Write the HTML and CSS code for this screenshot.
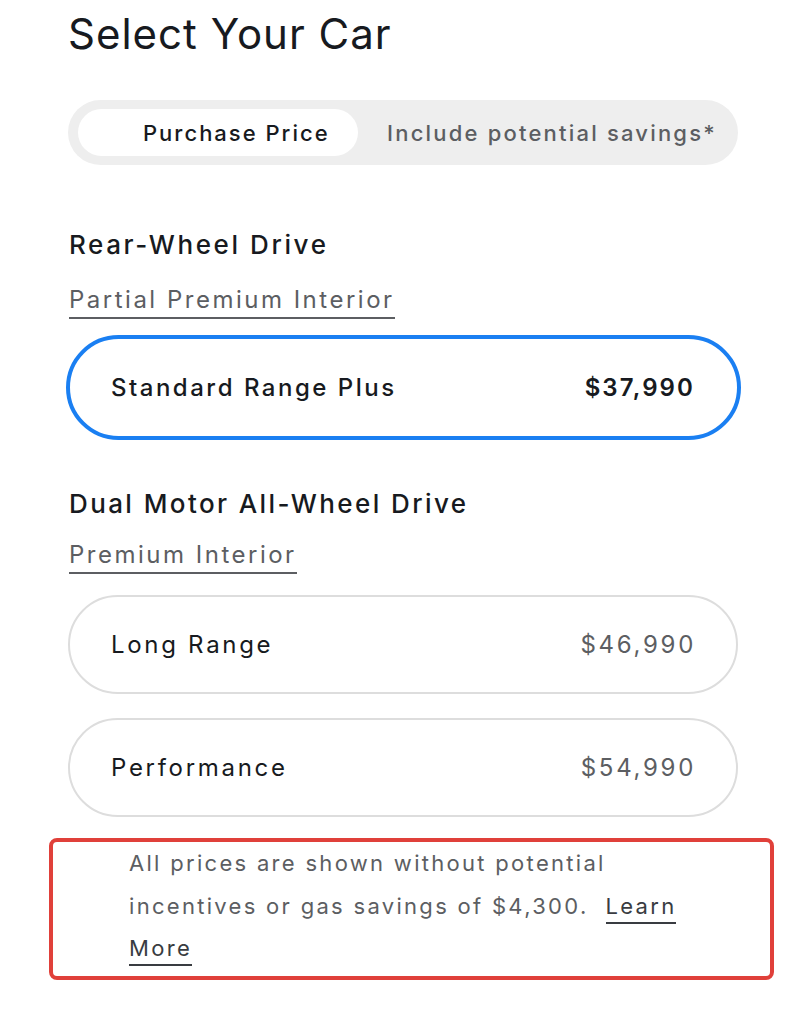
FILE: index.html
```html
<!DOCTYPE html>
<html>
<head>
<meta charset="utf-8">
<link rel="stylesheet" href="styles.css">
</head>
<body>
<main class="page">
  <h1 class="title">Select Your Car</h1>
  <div class="toggle">
    <div class="toggle-opt active"><span class="toggle-label">Purchase Price</span></div>
    <div class="toggle-opt other"><span class="toggle-label">Include potential savings*</span></div>
  </div>

  <section class="group first">
    <h2 class="group-title">Rear-Wheel Drive</h2>
    <div class="group-sub"><span class="link-gray">Partial Premium Interior</span></div>
    <div class="card selected">
      <span class="card-name">Standard Range Plus</span>
      <span class="card-price">$37,990</span>
    </div>
  </section>

  <section class="group second">
    <h2 class="group-title">Dual Motor All-Wheel Drive</h2>
    <div class="group-sub"><span class="link-gray">Premium Interior</span></div>
    <div class="card">
      <span class="card-name">Long Range</span>
      <span class="card-price">$46,990</span>
    </div>
    <div class="card">
      <span class="card-name">Performance</span>
      <span class="card-price">$54,990</span>
    </div>
  </section>

  <div class="notice">
    <p class="notice-text">All prices are shown without potential incentives or gas savings of $4,300.&nbsp; <a class="learn">Learn More</a></p>
  </div>
</main>
</body>
</html>
```

FILE: styles.css
```css
* { box-sizing: border-box; }
html, body { margin: 0; padding: 0; background: #fff; }
body {
  font-family: Inter, "Liberation Sans", sans-serif;
  color: #171a20;
  width: 804px;
  height: 1014px;
  overflow: hidden;
}
.page {
  padding: 0 66px 0 68px;
  display: flex;
  flex-direction: column;
}
.title {
  margin: 9px 0 0 0;
  font-size: 42px;
  font-weight: 400;
  line-height: 50px;
  letter-spacing: 1px;
}
.toggle {
  margin-top: 41px;
  width: 670px;
  height: 65px;
  background: #eeeeee;
  border-radius: 33px;
  padding: 10px;
  display: flex;
  align-items: center;
}
.toggle-opt {
  height: 47px;
  border-radius: 24px;
  display: flex;
  align-items: center;
  font-size: 22px;
  font-weight: 500;
  letter-spacing: 2px;
  color: #5c5e62;
}
.toggle-opt.active {
  width: 280px;
  background: #fff;
  color: #171a20;
  padding-left: 65px;
}
.toggle-opt.other {
  flex: 1;
  padding-left: 29px;
  letter-spacing: 2.2px;
}
.toggle-label { white-space: nowrap; }
.group { display: flex; flex-direction: column; }
.group-title {
  margin: 64px 0 0 1px;
  font-size: 26px;
  font-weight: 500;
  line-height: 32px;
  letter-spacing: 2.6px;
}
.group.second .group-title { margin-top: 48px; letter-spacing: 2.4px; }
.group-sub { margin-top: 24px; margin-left: 1px; }
.group.second .group-sub { margin-top: 20px; }
.link-gray {
  font-size: 24px;
  color: #5c5e62;
  line-height: 30px;
  letter-spacing: 2.5px;
  display: inline-block;
  border-bottom: 2px solid #5c5e62;
  padding-bottom: 2px;
}
.card {
  margin-top: 21px;
  width: 670px;
  height: 99px;
  border: 2px solid #dddddd;
  border-radius: 50px;
  display: flex;
  align-items: center;
  justify-content: space-between;
  padding: 0 42px 0 41px;
  font-size: 24px;
  letter-spacing: 2.7px;
}
.card + .card { margin-top: 24px; }
.card.selected {
  margin-top: 16px;
  margin-left: -2px;
  width: 675px;
  height: 105px;
  border: 4px solid #1a7ff2;
  border-radius: 53px;
  padding: 0 44px 0 41px;
  font-weight: 500;
  letter-spacing: 2.5px;
}
.card-price { color: #5c5e62; margin-right: -2px; }
.card.selected .card-price { color: #171a20; font-weight: 600; letter-spacing: 2.1px; }
.notice {
  margin: 21px 0 0 -19px;
  width: 725px;
  height: 142px;
  border: 4px solid #e0403a;
  border-radius: 8px;
  padding: 0 52px 0 76px;
}
.notice-text {
  margin: 0;
  font-size: 22px;
  line-height: 42.5px;
  letter-spacing: 2.3px;
  color: #5c5e62;
}
.learn {
  color: #393c41;
  border-bottom: 2px solid #393c41;
  padding-bottom: 3px;
}
```
